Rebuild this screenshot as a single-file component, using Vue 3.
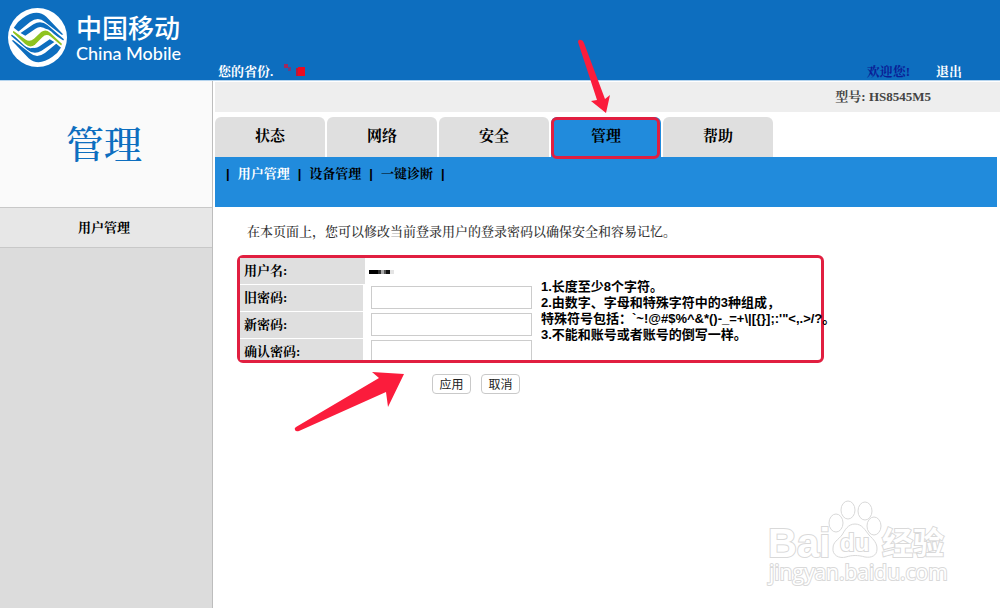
<script setup>
import { reactive, ref } from 'vue'

const tabs = ['状态', '网络', '安全', '管理', '帮助']
const activeTab = ref('管理')

const menus = ['用户管理', '设备管理', '一键诊断']
const activeMenu = ref('用户管理')

const fields = [
  { key: 'oldPassword', label: '旧密码:' },
  { key: 'newPassword', label: '新密码:' },
  { key: 'confirmPassword', label: '确认密码:' }
]

const form = reactive({
  oldPassword: '',
  newPassword: '',
  confirmPassword: ''
})

const notes = [
  '1.长度至少8个字符。',
  '2.由数字、字母和特殊字符中的3种组成，',
  '特殊符号包括：`~!@#$%^&*()-_=+\\|[{}];:\'"<,.>/?。',
  '3.不能和账号或者账号的倒写一样。'
]

function resetForm () {
  form.oldPassword = ''
  form.newPassword = ''
  form.confirmPassword = ''
}
</script>

<template>
  <div class="page">
    <header class="header">
      <div class="brand">
        <svg class="logo" viewBox="7 6 174 174" aria-hidden="true">
          <circle cx="94" cy="93" r="87" fill="#fff" />
          <g id="waves" fill="#0d6ebf">
            <path d="M24 64 Q34 46 50 36 Q92 6 120 32 L170 84 L165 85 L116 47 Q96 30 72 47 L38 75 Z" />
            <path d="M44 80 L82 54 Q104 40 124 57 L172 98 L170 102 L122 70 Q104 56 88 67 L58 88 Z" />
          </g>
          <use href="#waves" transform="rotate(180 94 93)" />
          <path d="M21 69 L60 97 Q71 104 82 95 L103 75 Q118 64 133 77 L169 111 L165 121 L131 92 Q120 84 110 94 L88 116 Q72 129 56 114 L19 79 Z" fill="#8fc31f" stroke="#fff" stroke-width="5" />
        </svg>
        <div class="brand-name">
          <span class="brand-cn">中国移动</span>
          <span class="brand-en">China Mobile</span>
        </div>
      </div>
      <div class="province">
        <span>您的省份.</span>
        <svg class="mask" viewBox="0 0 24 14" aria-hidden="true">
          <path d="M3 1h4v4h-4z" fill="#a02a5e" />
          <path d="M7 4h3v4h-3z" fill="#6f3d7c" />
          <path d="M15 5h3v8h-3z" fill="#b51b3b" />
          <path d="M17 4h7v9h-7z" fill="#ec0a20" />
        </svg>
      </div>
      <div class="account">
        <span class="welcome">欢迎您!</span>
        <a href="#" class="logout">退出</a>
      </div>
    </header>

    <div class="body">
      <aside class="sidebar">
        <h1>管理</h1>
        <a href="#" class="side-item">用户管理</a>
      </aside>

      <main class="main">
        <div class="model">型号: HS8545M5</div>

        <nav class="tabs">
          <button
            v-for="tab in tabs"
            :key="tab"
            type="button"
            class="tab"
            :class="{ active: tab === activeTab }"
            @click="activeTab = tab"
          >
            {{ tab }}
            <svg v-if="tab === activeTab" class="arrow-down" viewBox="0 0 40 78" aria-hidden="true">
              <path d="M2 4 Q2 1 5 2 Q7 2 8 5 L29 61 L34 57 L30 75 L15 63 L21 62 Z" fill="#fb1c3c" />
            </svg>
          </button>
        </nav>

        <nav class="submenu">
          <span class="bar">|</span>
          <template v-for="menu in menus" :key="menu">
            <a
              href="#"
              :class="{ current: menu === activeMenu }"
              @click.prevent="activeMenu = menu"
            >{{ menu }}</a>
            <span class="bar">|</span>
          </template>
        </nav>

        <p class="intro">在本页面上，您可以修改当前登录用户的登录密码以确保安全和容易记忆。</p>

        <form class="account-form" @submit.prevent @reset.prevent="resetForm">
          <div class="frame">
            <div class="rows">
              <div class="row">
                <span class="label wide">用户名:</span>
                <svg class="user-mask" viewBox="0 0 27 6" aria-hidden="true">
                  <path d="M0 1h9v4h-9z" fill="#000" />
                  <path d="M9 1h3v4h-3z" fill="#333" />
                  <path d="M12 1h3v4h-3z" fill="#aaa" />
                  <path d="M15 1h2v4h-2z" fill="#555" />
                  <path d="M17 1h4v4h-4z" fill="#111" />
                  <path d="M21 1h4v4h-4z" fill="#e4e4e4" />
                </svg>
              </div>
              <div v-for="field in fields" :key="field.key" class="row">
                <label class="label" :for="field.key">{{ field.label }}</label>
                <input :id="field.key" v-model="form[field.key]" type="password" />
              </div>
            </div>
            <div class="notes">
              <div v-for="note in notes" :key="note">{{ note }}</div>
            </div>
          </div>

          <div class="actions">
            <button type="submit">应用</button>
            <button type="reset">取消</button>
          </div>

          <svg class="arrow-up" viewBox="0 0 112 64" aria-hidden="true">
            <path d="M3 57 L86 8 L79 2 L111 4 L95 37 L93 22 L6 61 Q3 62 2 60 Q1 58 3 57 Z" fill="#fb1c3c" />
          </svg>
        </form>
      </main>
    </div>

    <svg class="watermark" viewBox="0 0 190 96" aria-hidden="true">
      <g fill="#fff" stroke="#d9d9d9">
        <text class="wm-bold" x="4" y="57">Bai</text>
        <ellipse cx="72" cy="23" rx="7" ry="9" />
        <ellipse cx="84" cy="10" rx="7" ry="9" />
        <ellipse cx="101" cy="11" rx="7" ry="9" />
        <ellipse cx="110" cy="26" rx="7" ry="9" />
        <path d="M91 24 C98 24 101 30 105 35 C110 40 113 43 113 49 C113 56 107 58 101 57 C94 55 88 55 82 57 C75 59 68 55 69 48 C69 42 74 40 78 35 C81 30 84 24 91 24 Z" />
        <text class="wm-du" x="76" y="51">du</text>
        <text class="wm-cn" x="118" y="54">经验</text>
        <text class="wm-url" x="5" y="80">jingyan.baidu.com</text>
      </g>
    </svg>
  </div>
</template>

<style>
body {
  margin: 0;
}
</style>

<style scoped>
.page {
  position: relative;
  display: flex;
  flex-direction: column;
  min-height: 100vh;
  background: #fff;
  color: #000;
  font-family: "Liberation Serif", "Noto Serif CJK SC", "Noto Sans CJK SC", serif;
  font-size: 13px;
  line-height: 16px;
}

a {
  color: inherit;
  text-decoration: none;
}

button {
  font-family: inherit;
  cursor: pointer;
}

.header {
  display: flex;
  box-sizing: border-box;
  height: 81px;
  padding-right: 38px;
  border-bottom: 1px solid #b5d4ee;
  background: #0d6ebf;
  color: #fff;
  font-weight: bold;
}

.brand {
  display: flex;
  gap: 9px;
  box-sizing: border-box;
  width: 218px;
  padding: 8px 0 0 8px;
}

.logo {
  width: 59px;
  height: 59px;
}

.brand-name {
  display: flex;
  flex-direction: column;
  padding-top: 5px;
  font-weight: 500;
  white-space: nowrap;
}

.brand-cn {
  font-family: "Noto Sans CJK SC", sans-serif;
  font-size: 26px;
  line-height: 28px;
}

.brand-en {
  font-family: Lato, sans-serif;
  font-size: 18px;
  line-height: 24px;
}

.province {
  display: flex;
  align-items: flex-end;
  gap: 8px;
  flex: 1;
}

.mask {
  width: 24px;
  height: 14px;
  margin-bottom: 3px;
}

.account {
  display: flex;
  align-items: flex-end;
  gap: 26px;
}

.welcome {
  color: #0a1e96;
}

.body {
  display: flex;
  flex: 1;
}

.sidebar {
  display: flex;
  flex-direction: column;
  flex: 0 0 212px;
  border-right: 1px solid #bdbdbd;
  background: #dcdcdc;
  text-align: center;
}

.sidebar h1 {
  margin: 0;
  padding: 40px 4px 38px 0;
  border-bottom: 1px solid #c8c8c8;
  background: #fafafa;
  color: #0d6ebf;
  font-size: 38px;
  font-weight: 500;
  line-height: 48px;
}

.side-item {
  padding: 12px 4px 11px 0;
  border-bottom: 1px solid #c8c8c8;
  background: #e7e7e7;
  font-weight: bold;
}

.main {
  flex: 1;
  min-width: 0;
  padding-left: 2px;
}

.model {
  margin-top: 1px;
  padding: 7px 69px 7px 0;
  background: #eee;
  color: #444;
  font-weight: bold;
  text-align: right;
}

.tabs {
  display: flex;
  gap: 2px;
  margin-top: 5px;
}

.tab {
  position: relative;
  width: 110px;
  height: 40px;
  padding: 0 0 6px;
  border: 0;
  border-radius: 6px 6px 0 0;
  background: #dfdfdf;
  color: #000;
  font-size: 15px;
  font-weight: bold;
}

.tab.active {
  background: #218bdc;
}

.tab.active::after {
  position: absolute;
  inset: 0 1px -2px 0;
  border: 3px solid #e11f40;
  border-radius: 6px;
  content: "";
}

.arrow-down {
  position: absolute;
  top: -79px;
  left: 25px;
  width: 40px;
  height: 78px;
}

.submenu {
  display: flex;
  gap: 8px;
  box-sizing: border-box;
  height: 50px;
  margin-right: 3px;
  padding: 9px 11px;
  background: #218bdc;
  font-weight: bold;
}

.submenu .bar {
  font-family: "Liberation Sans", sans-serif;
}

.submenu .current {
  color: #fff;
}

.intro {
  margin: 17px 32px 15px;
  color: #333;
  font-weight: 500;
}

.account-form {
  position: relative;
  margin: 0 22px;
}

.frame {
  display: flex;
  gap: 9px;
  box-sizing: border-box;
  max-width: 587px;
  height: 108px;
  border: 3px solid #e11f40;
  border-radius: 6px;
}

.rows {
  display: flex;
  flex: none;
  flex-direction: column;
  gap: 1px;
  overflow: hidden;
}

.row {
  display: flex;
  flex: 0 0 26px;
  gap: 8px;
}

.label {
  box-sizing: border-box;
  width: 123px;
  padding: 5px 4px;
  background: #dfdfdf;
  font-weight: bold;
}

.label.wide {
  width: 125px;
  margin-right: -4px;
}

.user-mask {
  width: 27px;
  height: 6px;
  margin-top: 11px;
}

.row input {
  box-sizing: border-box;
  width: 161px;
  height: 23px;
  margin-top: 1px;
  padding: 0 4px;
  border: 1px solid #ccc;
  background: #fff;
}

.notes {
  padding-top: 21px;
  font-family: "Liberation Sans", "Noto Sans CJK SC", sans-serif;
  font-weight: bold;
  white-space: nowrap;
}

.actions {
  display: flex;
  gap: 10px;
  padding: 11px 0 0 195px;
}

.actions button {
  box-sizing: border-box;
  width: 39px;
  height: 20px;
  padding: 0;
  border: 1px solid #c9c9c9;
  border-radius: 4px;
  background: #fff;
  color: #222;
  font-family: "Noto Sans CJK SC", sans-serif;
  font-size: 12px;
  line-height: 16px;
}

.arrow-up {
  position: absolute;
  top: 115px;
  left: 56px;
  width: 112px;
  height: 64px;
  pointer-events: none;
}

.watermark {
  position: absolute;
  right: 46px;
  bottom: 12px;
  width: 190px;
  height: 96px;
  pointer-events: none;
}

.watermark text {
  paint-order: stroke;
  stroke-width: 2px;
}

.wm-bold {
  font: bold 40px "Liberation Sans", sans-serif;
}

.wm-du {
  font: bold 24px "Liberation Sans", sans-serif;
}

.wm-cn {
  font: bold 31px "Noto Sans CJK SC", sans-serif;
}

.wm-url {
  font: 21px "Open Sans", sans-serif;
}
</style>
